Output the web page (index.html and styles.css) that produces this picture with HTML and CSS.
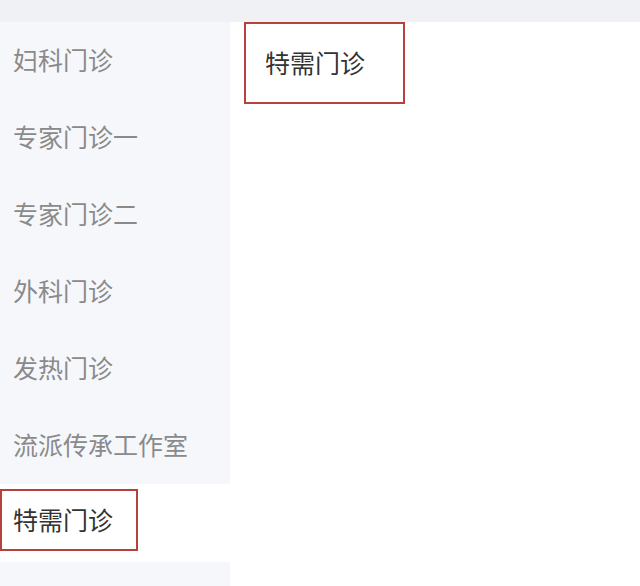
FILE: index.html
```html
<!DOCTYPE html>
<html lang="zh-CN">
<head>
    <meta charset="UTF-8">
    <meta name="viewport" content="width=device-width, initial-scale=1.0">
    <title>门诊科室</title>
    <link rel="stylesheet" href="styles.css">
</head>
<body>

<div class="topbar"></div>

<div class="main">
    <ul class="sidebar">
        <li class="dept">妇科门诊</li>
        <li class="dept">专家门诊一</li>
        <li class="dept">专家门诊二</li>
        <li class="dept">外科门诊</li>
        <li class="dept">发热门诊</li>
        <li class="dept">流派传承工作室</li>
        <li class="dept active"><span class="mark">特需门诊</span></li>
    </ul>

    <div class="content">
        <div class="clinic">特需门诊</div>
    </div>
</div>

</body>
</html>
```

FILE: styles.css
```css
body {
    font-family: "Noto Sans CJK SC", "Noto Sans", sans-serif;
    background-color: #fff;
    margin: 0;
    padding: 0;
    height: 586px;
    overflow: hidden;
}

.topbar {
    height: 22px;
    background-color: #eff1f5;
}

.main {
    display: flex;
    height: 564px;
}

.sidebar {
    list-style: none;
    margin: 0;
    padding: 0;
    width: 230px;
    background-color: #f6f7fb;
}

.dept {
    height: 77px;
    display: flex;
    align-items: center;
    padding-left: 13px;
    padding-bottom: 3px;
    font-size: 25px;
    color: #8a8a8a;
    box-sizing: border-box;
}

.dept.active {
    background-color: #fff;
    color: #333;
    padding-left: 0;
    padding-bottom: 0;
    height: 78px;
    align-items: flex-start;
    padding-top: 5px;
}

.mark {
    display: flex;
    align-items: center;
    width: 138px;
    height: 62px;
    padding-left: 11px;
    padding-bottom: 2px;
    border: 2px solid #b5423f;
    box-sizing: border-box;
}

.content {
    flex: 1;
    padding-left: 14px;
}

.clinic {
    width: 161px;
    height: 82px;
    display: flex;
    align-items: center;
    padding-left: 19px;
    padding-bottom: 2px;
    border: 2px solid #b5423f;
    box-sizing: border-box;
    font-size: 25px;
    color: #333;
}
```
